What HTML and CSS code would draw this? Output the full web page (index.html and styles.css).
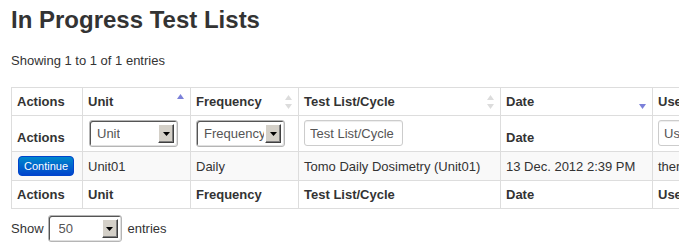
FILE: index.html
```html
<!DOCTYPE html>
<html lang="en">
<head>
  <meta charset="UTF-8">
  <title>In Progress Test Lists</title>
  <link rel="stylesheet" href="styles.css">
</head>
<body>
  <div class="page">
    <h1>In Progress Test Lists</h1>
    <div class="info">Showing 1 to 1 of 1 entries</div>

    <div class="table-wrapper">
      <table>
        <colgroup>
          <col class="c-actions">
          <col class="c-unit">
          <col class="c-freq">
          <col class="c-list">
          <col class="c-date">
          <col class="c-user">
        </colgroup>
        <thead>
          <tr class="head-row">
            <th>Actions</th>
            <th class="sortable">Unit
              <svg class="sort-icon" width="9" height="16" viewBox="0 0 9 16"><polygon points="1,5 4.5,0 8,5" fill="#7b80d9"/></svg>
            </th>
            <th class="sortable">Frequency
              <svg class="sort-icon" width="9" height="16" viewBox="0 0 9 16"><polygon points="1,6 4.5,1 8,6" fill="#dcdcdc"/><polygon points="1,10 4.5,15 8,10" fill="#dcdcdc"/></svg>
            </th>
            <th class="sortable">Test List/Cycle
              <svg class="sort-icon" width="9" height="16" viewBox="0 0 9 16"><polygon points="1,6 4.5,1 8,6" fill="#dcdcdc"/><polygon points="1,10 4.5,15 8,10" fill="#dcdcdc"/></svg>
            </th>
            <th class="sortable">Date
              <svg class="sort-icon" width="9" height="16" viewBox="0 0 9 16"><polygon points="1,10 4.5,15 8,10" fill="#7b80d9"/></svg>
            </th>
            <th>User</th>
          </tr>
          <tr class="filter-row">
            <th>Actions</th>
            <th>
              <div class="fake-select unit-select">
                <span class="fs-text">Unit</span>
                <span class="fs-arrow"><svg width="7" height="4" viewBox="0 0 7 4"><polygon points="0,0 7,0 3.5,4" fill="#000"/></svg></span>
              </div>
            </th>
            <th>
              <div class="fake-select freq-select">
                <span class="fs-text">Frequency</span>
                <span class="fs-arrow"><svg width="7" height="4" viewBox="0 0 7 4"><polygon points="0,0 7,0 3.5,4" fill="#000"/></svg></span>
              </div>
            </th>
            <th><input type="text" class="filter-input list-input" placeholder="Test List/Cycle"></th>
            <th>Date</th>
            <th><input type="text" class="filter-input user-input" placeholder="User"></th>
          </tr>
        </thead>
        <tbody>
          <tr class="odd">
            <td><button class="btn-continue">Continue</button></td>
            <td>Unit01</td>
            <td>Daily</td>
            <td>Tomo Daily Dosimetry (Unit01)</td>
            <td>13 Dec. 2012 2:39 PM</td>
            <td>therapist</td>
          </tr>
        </tbody>
        <tfoot>
          <tr>
            <th>Actions</th>
            <th>Unit</th>
            <th>Frequency</th>
            <th>Test List/Cycle</th>
            <th>Date</th>
            <th>User</th>
          </tr>
        </tfoot>
      </table>
    </div>

    <div class="length">
      Show
      <div class="fake-select length-select">
        <span class="fs-text">50</span>
        <span class="fs-arrow"><svg width="7" height="4" viewBox="0 0 7 4"><polygon points="0,0 7,0 3.5,4" fill="#000"/></svg></span>
      </div>
      entries
    </div>
  </div>
</body>
</html>
```

FILE: styles.css
```css
body {
  margin: 0;
  font-family: "Liberation Sans", Arial, sans-serif;
  font-size: 13px;
  color: #333333;
  background-color: #ffffff;
  overflow: hidden;
}
.page {
  padding: 6px 0 0 11px;
}
h1 {
  margin: 0;
  font-size: 24px;
  line-height: 28px;
  font-weight: bold;
  color: #333333;
}
.info {
  margin-top: 18px;
  font-size: 13px;
  line-height: 17px;
}
.table-wrapper {
  margin-top: 18px;
  width: 800px;
}
table {
  table-layout: fixed;
  width: 761px;
  border-collapse: collapse;
}
.c-actions { width: 71px; }
.c-unit { width: 108px; }
.c-freq { width: 108px; }
.c-list { width: 202px; }
.c-date { width: 152px; }
.c-user { width: 120px; }
th, td {
  border: 1px solid #dddddd;
  padding: 4px 5px;
  line-height: 19px;
  text-align: left;
  vertical-align: bottom;
  white-space: nowrap;
  overflow: hidden;
}
th {
  font-weight: bold;
}
td {
  vertical-align: middle;
}
.sortable {
  position: relative;
}
.sort-icon {
  position: absolute;
  right: 5px;
  top: 6px;
}
tbody tr.odd td {
  background-color: #f9f9f9;
}
.btn-continue {
  display: block;
  height: 20px;
  width: 56px;
  margin-left: 1px;
  padding: 0;
  font-family: "Liberation Sans", Arial, sans-serif;
  font-size: 11px;
  color: #ffffff;
  border: 1px solid #0044cc;
  border-radius: 4px;
  background: linear-gradient(#0088cc, #0044cc);
  cursor: pointer;
}
.fake-select {
  display: flex;
  align-items: center;
  justify-content: space-between;
  box-sizing: border-box;
  height: 27px;
  border: 1px solid #b5b5b5;
  border-radius: 3px;
  background-color: #ffffff;
  box-shadow: inset 1px 1px 0 #555555, inset -1px -1px 0 #e0e0e0;
  padding: 0 3px 0 7px;
  font-weight: normal;
  color: #555555;
  overflow: hidden;
}
.fs-text {
  overflow: hidden;
  white-space: nowrap;
}
.fs-arrow {
  display: flex;
  align-items: center;
  justify-content: center;
  flex-shrink: 0;
  box-sizing: border-box;
  width: 16px;
  height: 19px;
  background-color: #d4d0c8;
  border: 1px solid;
  border-color: #ffffff #404040 #404040 #ffffff;
  box-shadow: inset -1px -1px 0 #808080;
}
.unit-select {
  width: 89px;
  margin-left: 1px;
}
.freq-select {
  width: 89px;
}
.freq-select .fs-text {
  width: 60px;
}
.filter-input {
  display: block;
  box-sizing: border-box;
  height: 26px;
  margin: 0 0 1px 0;
  padding: 0 5px;
  font-family: "Liberation Sans", Arial, sans-serif;
  font-size: 13px;
  color: #555555;
  border: 1px solid #cccccc;
  border-radius: 3px;
  box-shadow: inset 0 1px 1px rgba(0, 0, 0, 0.075);
}
.filter-input::placeholder {
  color: #555555;
}
.list-input {
  width: 99px;
}
.user-input {
  width: 100px;
}
.length {
  display: flex;
  align-items: center;
  gap: 4px;
  margin-top: 6px;
  font-size: 13px;
}
.length-select {
  width: 74px;
  padding-left: 10px;
  margin-right: 2px;
}
```
